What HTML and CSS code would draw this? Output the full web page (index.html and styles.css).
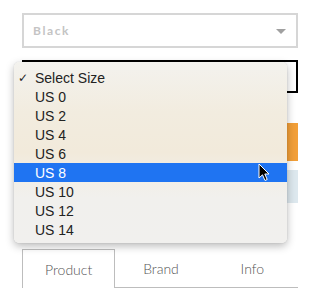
FILE: index.html
```html
<!DOCTYPE html>
<html lang="en">
<head>
    <meta charset="UTF-8">
    <title>Select Size</title>
    <link rel="stylesheet" href="styles.css">
</head>
<body>
    <div class="page">
        <div class="select select-color">
            <span class="select-value">Black</span>
            <span class="caret"></span>
        </div>
        <div class="select select-size"></div>
        <div class="add-button"></div>
        <div class="notice"></div>

        <div class="tabs">
            <div class="tab active">Product</div>
            <div class="tab">Brand</div>
            <div class="tab">Info</div>
        </div>

        <!-- open dropdown of the size select -->
        <ul class="menu">
            <li class="menu-item"><span class="check">✓</span>Select Size</li>
            <li class="menu-item"><span class="check"></span>US 0</li>
            <li class="menu-item"><span class="check"></span>US 2</li>
            <li class="menu-item"><span class="check"></span>US 4</li>
            <li class="menu-item"><span class="check"></span>US 6</li>
            <li class="menu-item hover"><span class="check"></span>US 8</li>
            <li class="menu-item"><span class="check"></span>US 10</li>
            <li class="menu-item"><span class="check"></span>US 12</li>
            <li class="menu-item"><span class="check"></span>US 14</li>
        </ul>

        <svg class="cursor" width="12" height="19" viewBox="0 0 12 19">
            <path d="M1 1 L1 15 L4.5 11.8 L7 17.5 L9.2 16.5 L6.8 11 L11 11 Z" fill="#000" stroke="#fff" stroke-width="1"/>
        </svg>
    </div>
</body>
</html>
```

FILE: styles.css
```css
body {
    margin: 0;
    padding: 0;
    background: #fff;
    font-family: "Liberation Sans", Arial, sans-serif;
}
.page {
    position: relative;
    padding: 13px 22px 0;
    height: 294px;
    box-sizing: border-box;
    overflow: hidden;
}
.select {
    box-sizing: border-box;
    display: flex;
    align-items: center;
    justify-content: space-between;
}
.select-color {
    height: 35px;
    border: 2px solid #d6d6d6;
    padding: 0 10px 0 9px;
}
.select-value {
    font-family: Lato, "Open Sans", sans-serif;
    font-weight: bold;
    font-size: 12px;
    letter-spacing: 1.6px;
    color: #c4c4c4;
}
.caret {
    width: 0;
    height: 0;
    border-left: 5px solid transparent;
    border-right: 5px solid transparent;
    border-top: 5px solid #a0a0a0;
    margin-top: 1px;
}
.select-size {
    height: 33px;
    margin-top: 12px;
    border: 2px solid #000;
}
.add-button {
    height: 38px;
    margin-top: 30px;
    background-color: #f29f38;
}
.notice {
    height: 33px;
    margin-top: 9px;
    background-color: #dde8ee;
}
.tabs {
    display: flex;
    margin-top: 46px;
    height: 39px;
}
.tab {
    flex: 1;
    display: flex;
    align-items: center;
    justify-content: center;
    font-family: Lato, "Open Sans", sans-serif;
    font-weight: 300;
    font-size: 14px;
    color: #555;
    border-bottom: 1px solid #bdbdbd;
    padding-top: 1px;
}
.tab.active {
    border: 1px solid #bdbdbd;
    border-bottom: none;
}
.menu {
    position: absolute;
    left: 14px;
    top: 62px;
    width: 273px;
    margin: 0;
    padding: 6px 0 4px;
    list-style: none;
    box-sizing: border-box;
    border-radius: 5px;
    background: linear-gradient(#f3f2ee 0%, #f2ecdf 28%, #f2eadb 50%, #f2eee6 62%, #f1f0ed 75%, #f1f0ee 100%);
    box-shadow: 0 3px 9px rgba(0, 0, 0, 0.28), 0 0 1px rgba(0, 0, 0, 0.25);
}
.menu-item {
    display: flex;
    align-items: center;
    height: 19px;
    font-size: 14px;
    color: #222;
}
.menu-item.hover {
    background-color: #1f74f2;
    color: #fff;
}
.check {
    width: 17px;
    margin-left: 4px;
    font-family: "DejaVu Sans", sans-serif;
    font-size: 12px;
}
.cursor {
    position: absolute;
    left: 258px;
    top: 163px;
}
```
